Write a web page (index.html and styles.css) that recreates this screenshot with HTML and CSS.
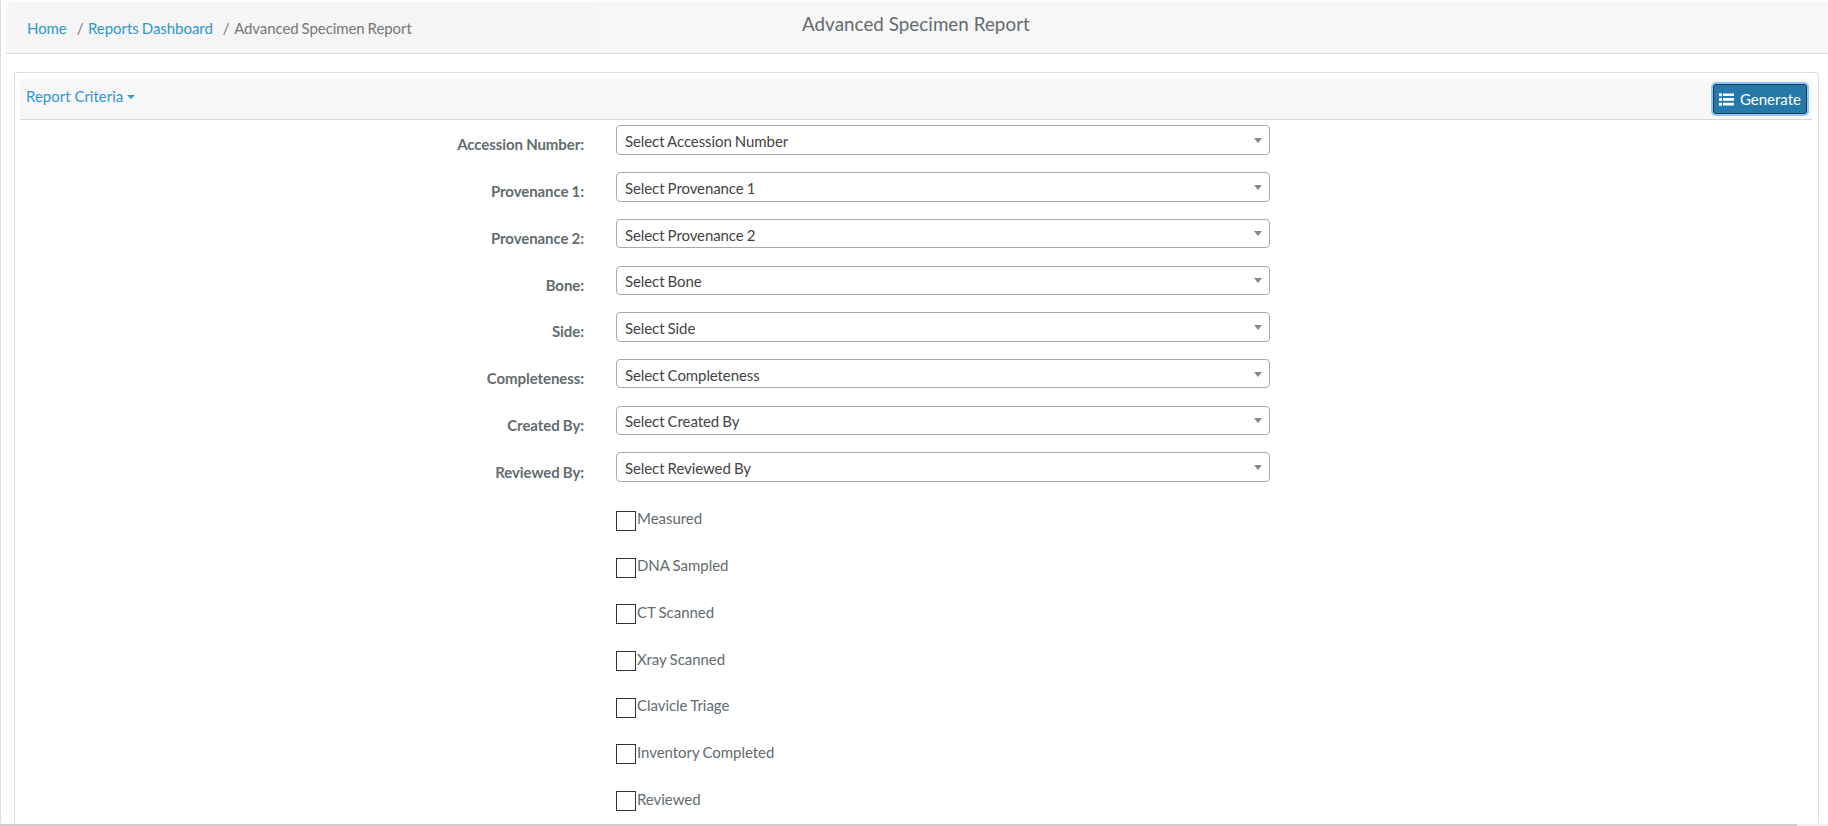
FILE: index.html
```html
<!DOCTYPE html>
<html lang="en">
<head>
<meta charset="utf-8">
<title>Advanced Specimen Report</title>
<link rel="stylesheet" href="styles.css">
</head>
<body>
<div class="page">
  <header class="topbar">
    <nav class="crumbs"><a href="#" class="home">Home</a><span class="sep">/</span><a href="#" class="dash">Reports Dashboard</a><span class="sep">/</span><span class="current">Advanced Specimen Report</span></nav>
    <h1 class="title"><span>Advanced Specimen Report</span></h1>
  </header>
  <main class="panel">
    <div class="panel-head">
      <a href="#" class="criteria"><span>Report Criteria</span><i class="caret"></i></a>
      <button class="generate" type="button">
        <svg width="15" height="13" viewBox="0 0 15 13" fill="#fff"><path d="M0 .3h3v3H0zM0 5h3v3H0zM0 9.7h3v3H0zM4 .4h11v2.7H4zM4 5.1h11v2.7H4zM4 9.8h11v2.7H4z"/></svg>
        <span>Generate</span>
      </button>
    </div>
    <form class="form">
      <div class="row"><label>Accession Number:</label><div class="select"><span>Select Accession Number</span><i class="arrow"></i></div></div>
      <div class="row"><label>Provenance 1:</label><div class="select"><span>Select Provenance 1</span><i class="arrow"></i></div></div>
      <div class="row"><label>Provenance 2:</label><div class="select"><span>Select Provenance 2</span><i class="arrow"></i></div></div>
      <div class="row"><label>Bone:</label><div class="select"><span>Select Bone</span><i class="arrow"></i></div></div>
      <div class="row"><label>Side:</label><div class="select"><span>Select Side</span><i class="arrow"></i></div></div>
      <div class="row"><label>Completeness:</label><div class="select"><span>Select Completeness</span><i class="arrow"></i></div></div>
      <div class="row"><label>Created By:</label><div class="select"><span>Select Created By</span><i class="arrow"></i></div></div>
      <div class="row"><label>Reviewed By:</label><div class="select"><span>Select Reviewed By</span><i class="arrow"></i></div></div>
      <div class="checks">
        <div class="check"><i class="box"></i><span>Measured</span></div>
        <div class="check"><i class="box"></i><span>DNA Sampled</span></div>
        <div class="check"><i class="box"></i><span>CT Scanned</span></div>
        <div class="check"><i class="box"></i><span>Xray Scanned</span></div>
        <div class="check"><i class="box"></i><span>Clavicle Triage</span></div>
        <div class="check"><i class="box"></i><span>Inventory Completed</span></div>
        <div class="check"><i class="box"></i><span>Reviewed</span></div>
      </div>
    </form>
  </main>
</div>
<div class="scrollbar"><div class="thumb"></div></div>
</body>
</html>
```
FILE: styles.css
```css
* { box-sizing: border-box; }
body {
  margin: 0;
  height: 826px;
  overflow: hidden;
  background: #fff;
  color: #636b6f;
  font: 15px/20px Lato, "Open Sans", sans-serif;
  white-space: nowrap;
}
a { color: #3097d1; text-decoration: none; }
.page {
  height: 823px;
  overflow: hidden;
  border-left: 1px solid #ddd;
  padding: 2px 0 0 5px;
}
.topbar {
  display: flex;
  height: 52px;
  padding: 5px 0 0 4px;
  background: #f7f7f7;
  border-bottom: 1px solid #d8d8d8;
}
.crumbs {
  display: flex;
  width: 584px;
  height: 41px;
  padding: 11px 0 0 17px;
  background: #f5f5f5;
  border-radius: 3px;
  color: #777;
}
.home { letter-spacing: -.08px; }
.dash { letter-spacing: -.04px; word-spacing: -.8px; }
.current { letter-spacing: -.08px; word-spacing: -.8px; }
.sep { margin: 0 4.5px 0 10px; }
.title {
  margin: 5px 0 0 208px;
  font-size: 18.75px;
  line-height: 24px;
  letter-spacing: .06px;
  font-weight: 400;
}
.panel {
  width: 1805px;
  height: 900px;
  margin: 18px 0 0 8px;
  padding: 6px 6px 6px 5px;
  border: 1px solid #ddd;
  border-radius: 3px;
}
.panel-head {
  display: flex;
  justify-content: space-between;
  height: 41px;
  padding: 5px 5px 0 6px;
  background: #f7f7f7;
  border-bottom: 1px solid #d8d8d8;
  border-radius: 3px 3px 0 0;
}
.criteria { display: flex; gap: 4px; padding-top: 2px; }
.caret {
  margin-top: 9px;
  width: 0;
  height: 0;
  border: 4px solid transparent;
  border-top-color: #3097d1;
  border-bottom: 0;
}
.generate {
  display: flex;
  align-items: center;
  gap: 6px;
  width: 94px;
  height: 30px;
  padding: 0 5px;
  border: 1px solid #133d55;
  border-radius: 3px;
  background: #2579a9;
  box-shadow: 0 0 0 2px #8fc3ff;
  color: #fff;
  font: 15px/20px Lato, sans-serif;
}
.form { padding-top: 5.36px; }
.row { display: flex; height: 46.72px; }
.row label {
  width: 564px;
  padding-top: 9.12px;
  text-align: right;
  font-weight: 700;
  letter-spacing: -.08px;
  word-spacing: -.4px;
}
.select {
  display: flex;
  justify-content: space-between;
  width: 654px;
  height: 29.5px;
  margin-left: 32px;
  padding: 4.74px 7px 0 8px;
  border: 1px solid #aaa;
  border-radius: 4px;
  color: #444;
  letter-spacing: -.09px;
  word-spacing: -.6px;
}
.arrow {
  width: 0;
  height: 0;
  margin-top: 6.9px;
  border: 4px solid transparent;
  border-top: 5px solid #888;
  border-bottom: 0;
}
.checks { padding: 11.73px 0 0 596px; }
.check {
  display: flex;
  gap: 1px;
  height: 46.72px;
  letter-spacing: -.04px;
  word-spacing: -.6px;
}
.check span { margin-top: -2.4px; }
.box { width: 20px; height: 20px; border: 1px solid #333; }
.scrollbar { height: 2px; margin-top: 1px; background: #f0f0f0; }
.thumb { width: 1797px; height: 2px; background: #cdcdcd; }
```
